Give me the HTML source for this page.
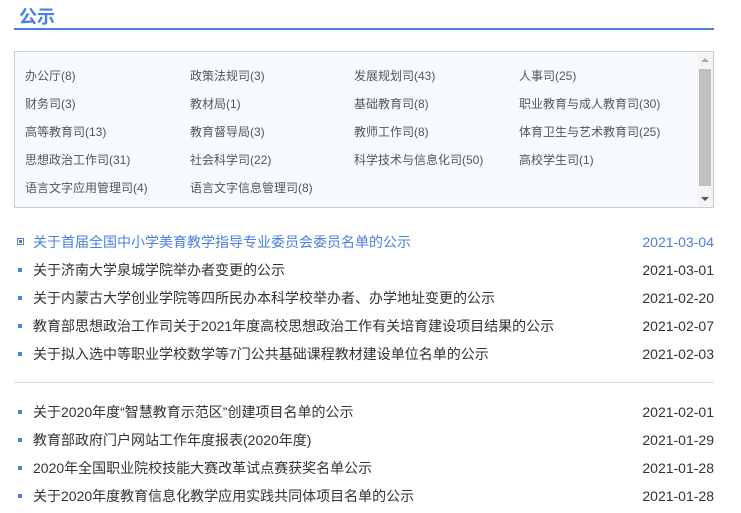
<!DOCTYPE html>
<html><head><meta charset="utf-8"><style>
body{margin:0;width:741px;height:513px;overflow:hidden;background:#fff;font-family:"Liberation Sans","Noto Sans CJK SC",sans-serif;}
.t{position:absolute;left:19px;top:5px;font-size:18px;font-weight:bold;color:#4a7fe0;line-height:24px;}
.ul{position:absolute;left:14px;top:28px;width:700px;height:2px;background:#4a7fe0;}
.box{position:absolute;left:14px;top:51px;width:698px;height:155px;border:1px solid #ccc;background:#f7fbff;}
.c{position:absolute;font-size:12px;color:#555;line-height:16px;white-space:nowrap;}
.sb{position:absolute;left:682px;top:0;width:16px;height:155px;background:#f4f4f4;}
.th{position:absolute;left:2px;top:17px;width:12px;height:117px;background:#c1c1c1;}
.r{position:absolute;left:14px;width:700px;height:20px;font-size:14px;color:#333;line-height:20px;}
.r .d{position:absolute;right:0;top:0;}
.r .s{position:absolute;left:33px;top:0;}
.b{position:absolute;left:4px;top:8px;width:4px;height:4px;background:#4a7fe0;}
.hl{color:#4a7fe0;}
.hr{position:absolute;left:14px;top:382px;width:700px;height:1px;background:#ddd;}
</style></head><body>
<div class="t">公示</div><div class="ul"></div>
<div class="box">
<div class="c" style="left:10px;top:16px">办公厅(8)</div>
<div class="c" style="left:175px;top:16px">政策法规司(3)</div>
<div class="c" style="left:339px;top:16px">发展规划司(43)</div>
<div class="c" style="left:504px;top:16px">人事司(25)</div>
<div class="c" style="left:10px;top:44px">财务司(3)</div>
<div class="c" style="left:175px;top:44px">教材局(1)</div>
<div class="c" style="left:339px;top:44px">基础教育司(8)</div>
<div class="c" style="left:504px;top:44px">职业教育与成人教育司(30)</div>
<div class="c" style="left:10px;top:72px">高等教育司(13)</div>
<div class="c" style="left:175px;top:72px">教育督导局(3)</div>
<div class="c" style="left:339px;top:72px">教师工作司(8)</div>
<div class="c" style="left:504px;top:72px">体育卫生与艺术教育司(25)</div>
<div class="c" style="left:10px;top:100px">思想政治工作司(31)</div>
<div class="c" style="left:175px;top:100px">社会科学司(22)</div>
<div class="c" style="left:339px;top:100px">科学技术与信息化司(50)</div>
<div class="c" style="left:504px;top:100px">高校学生司(1)</div>
<div class="c" style="left:10px;top:128px">语言文字应用管理司(4)</div>
<div class="c" style="left:175px;top:128px">语言文字信息管理司(8)</div>
<div class="sb"><div class="th"></div>
<div style="position:absolute;left:4px;top:6px;border:4px solid transparent;border-bottom:4px solid #aaa;border-top:0"></div>
<div style="position:absolute;left:4px;top:145px;border:4px solid transparent;border-top:4px solid #555;border-bottom:0"></div></div>
</div>
<div class="r hl" style="top:232px"><div style="position:absolute;left:3px;top:6px;width:5px;height:5px;border:1px solid #4a7fe0;background:#fff"><div style="margin:1px;width:3px;height:3px;background:#4a7fe0"></div></div><span class="s" style="left:19px">关于首届全国中小学美育教学指导专业委员会委员名单的公示</span><span class="d">2021-03-04</span></div>
<div class="r" style="top:260px"><div class="b"></div><span class="s" style="left:19px">关于济南大学泉城学院举办者变更的公示</span><span class="d">2021-03-01</span></div>
<div class="r" style="top:288px"><div class="b"></div><span class="s" style="left:19px">关于内蒙古大学创业学院等四所民办本科学校举办者、办学地址变更的公示</span><span class="d">2021-02-20</span></div>
<div class="r" style="top:316px"><div class="b"></div><span class="s" style="left:19px">教育部思想政治工作司关于2021年度高校思想政治工作有关培育建设项目结果的公示</span><span class="d">2021-02-07</span></div>
<div class="r" style="top:344px"><div class="b"></div><span class="s" style="left:19px">关于拟入选中等职业学校数学等7门公共基础课程教材建设单位名单的公示</span><span class="d">2021-02-03</span></div>
<div class="hr"></div>
<div class="r" style="top:402px"><div class="b"></div><span class="s" style="left:19px">关于2020年度“智慧教育示范区”创建项目名单的公示</span><span class="d">2021-02-01</span></div>
<div class="r" style="top:430px"><div class="b"></div><span class="s" style="left:19px">教育部政府门户网站工作年度报表(2020年度)</span><span class="d">2021-01-29</span></div>
<div class="r" style="top:458px"><div class="b"></div><span class="s" style="left:19px">2020年全国职业院校技能大赛改革试点赛获奖名单公示</span><span class="d">2021-01-28</span></div>
<div class="r" style="top:486px"><div class="b"></div><span class="s" style="left:19px">关于2020年度教育信息化教学应用实践共同体项目名单的公示</span><span class="d">2021-01-28</span></div>
</body></html>
